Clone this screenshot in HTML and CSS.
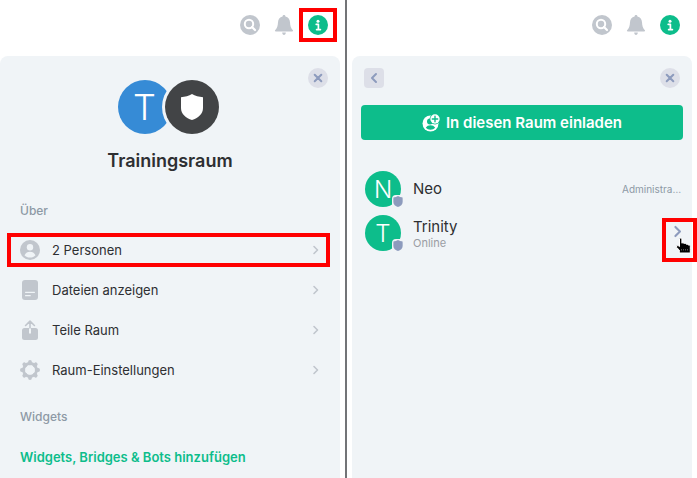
FILE: index.html
```html
<!DOCTYPE html>
<html lang="de">
<head>
<meta charset="utf-8">
<meta name="viewport" content="width=device-width, initial-scale=1">
<title>Trainingsraum</title>
<link rel="stylesheet" href="styles.css">
</head>
<body>
<svg class="defs" aria-hidden="true">
  <symbol id="search" viewBox="0 0 20 20"><circle cx="10" cy="10" r="10" fill="currentColor"/><circle cx="9" cy="9" r="4.200" fill="none" stroke="#fff" stroke-width="2"/><path d="M12 12l3 3" stroke="#fff" stroke-width="2.2" stroke-linecap="round"/></symbol>
  <symbol id="bell" viewBox="0 0 20 20"><path fill="currentColor" d="M10 0c-.9 0-1.400.6-1.400 1.400C5.600 2 4.200 4.300 4 7.300c-.2 4-.8 5.700-2.700 7.600-.7.7-.3 1.500.5 1.500h16.400c.8 0 1.200-.8.5-1.500-1.900-1.900-2.500-3.600-2.700-7.600-.2-3-1.600-5.300-4.600-5.900C11.400.6 10.900 0 10 0zM8.200 17.600h3.600c0 1.400-.8 2.400-1.800 2.400s-1.800-1-1.800-2.400z"/></symbol>
  <symbol id="info" viewBox="0 0 20 20"><circle cx="10" cy="10" r="10" fill="currentColor"/><circle cx="10" cy="6.200" r="1.500" fill="#fff"/><path d="M8.200 9.300h2.200v5M8.600 14.600h3.800" fill="none" stroke="#fff" stroke-width="1.700" stroke-linecap="round" stroke-linejoin="round"/></symbol>
  <symbol id="close" viewBox="0 0 20 20"><path d="M6.700 6.700l6.600 6.600M13.300 6.700l-6.600 6.600" stroke="currentColor" stroke-width="2" stroke-linecap="round"/></symbol>
  <symbol id="back" viewBox="0 0 20 20"><path d="M12 6l-4 4 4 4" fill="none" stroke="currentColor" stroke-width="2" stroke-linecap="round" stroke-linejoin="round"/></symbol>
  <symbol id="chevron" viewBox="0 0 8 10"><path d="M2 1.500L5.500 5 2 8.500" fill="none" stroke="currentColor" stroke-width="1.600" stroke-linecap="round" stroke-linejoin="round"/></symbol>
  <symbol id="shield" viewBox="0 0 22 26"><path fill="currentColor" d="M11 0c3 1.800 7 3 11 3.200V14c0 6-5 10-11 12C5 24 0 20 0 14V3.200C4 3 8 1.800 11 0z"/></symbol>
  <symbol id="person" viewBox="0 0 20 20"><circle cx="10" cy="10" r="10" fill="currentColor"/><circle cx="10" cy="7.200" r="3.200" fill="#f0f4f7"/><path fill="#f0f4f7" d="M4.500 15.200c1.200-2.300 3.200-3.400 5.500-3.400s4.300 1.100 5.500 3.400C14.200 16.700 12.200 17.600 10 17.600s-4.200-.9-5.500-2.400z"/></symbol>
  <symbol id="file" viewBox="0 0 20 20"><rect x="2" width="16" height="20" rx="3" fill="currentColor"/><path d="M5.600 12.300h8.800M5.600 15.700h4.600" stroke="#f0f4f7" stroke-width="1.300" stroke-linecap="round"/></symbol>
  <symbol id="share" viewBox="0 0 20 20"><path fill="currentColor" d="M4.500 8H9v5.500h2V8h4.500A2.500 2.500 0 0 1 18 10.500v7a2.500 2.500 0 0 1-2.500 2.500h-11A2.500 2.500 0 0 1 2 17.500v-7A2.500 2.500 0 0 1 4.500 8z"/><path d="M10 8V1.200M5.600 5.500L10 1.100l4.400 4.400" fill="none" stroke="currentColor" stroke-width="1.600" stroke-linecap="round" stroke-linejoin="round"/></symbol>
  <symbol id="gear" viewBox="0 0 20 20"><g stroke="currentColor" fill="none"><circle cx="10" cy="10" r="6.500" stroke-width="2.800"/><path d="M10 1.900v1.500M10 16.600v1.500M1.900 10h1.500M16.600 10h1.500M4.300 4.300l1 1M14.700 14.700l1 1M4.300 15.700l1-1M14.700 5.300l1-1" stroke-width="3.800" stroke-linecap="round"/></g></symbol>
  <symbol id="invite" viewBox="0 0 18 18"><circle cx="8.500" cy="9.500" r="8" fill="#fff"/><circle cx="8" cy="7.500" r="3" fill="#0dbd8b"/><path fill="#0dbd8b" d="M3.800 13.700c1-1.700 2.700-2.500 4.700-2.500s3.700.8 4.700 2.500c-1.200 1.300-2.900 2-4.700 2s-3.500-.7-4.700-2z"/><circle cx="13" cy="5" r="5.400" fill="#0dbd8b"/><circle cx="13" cy="5" r="4.700" fill="#fff"/><path d="M13 2.300v5.400M10.300 5h5.400" stroke="#0dbd8b" stroke-width="1.400" stroke-linecap="round"/></symbol>
  <symbol id="hand" viewBox="0 0 15 16"><path fill="#000" stroke="#fff" stroke-width="1" stroke-linejoin="round" d="M3.500 1.500c0-1.300 2.400-1.300 2.400 0v4.200c.6-.7 2-.5 2.200.4.700-.5 2-.2 2.200.7.800-.4 1.800 0 2 .8.900-.3 2 .2 2 1.200v3.200V15.500H3.300V12.500L.6 10V8.500c.8-.7 1.900-.4 2.900.6z"/><path d="M5.500 11.500v1.500M7.500 11.500v1.500M9.500 11.500v1.500M11.500 11.500v1.500" stroke="#888" stroke-width=".6"/></symbol>
</svg>
<main class="views">
  <section class="view view-room">
    <header class="toolbar">
      <button class="tool" aria-label="Suchen"><svg><use href="#search"/></svg></button>
      <button class="tool" aria-label="Benachrichtigungen"><svg><use href="#bell"/></svg></button>
      <button class="tool active marked" aria-label="Rauminfo"><svg><use href="#info"/></svg></button>
    </header>
    <div class="panel">
      <div class="panel-bar"><button class="close" aria-label="Schließen"><svg><use href="#close"/></svg></button></div>
      <div class="room">
        <div class="avatars">
          <span class="room-avatar">T</span>
          <span class="room-badge"><svg><use href="#shield"/></svg></span>
        </div>
        <h1>Trainingsraum</h1>
      </div>
      <h2>Über</h2>
      <nav>
        <button class="entry marked"><svg class="icon"><use href="#person"/></svg><span>2 Personen</span><svg class="chevron"><use href="#chevron"/></svg></button>
        <button class="entry"><svg class="icon"><use href="#file"/></svg><span>Dateien anzeigen</span><svg class="chevron"><use href="#chevron"/></svg></button>
        <button class="entry"><svg class="icon"><use href="#share"/></svg><span>Teile Raum</span><svg class="chevron"><use href="#chevron"/></svg></button>
        <button class="entry"><svg class="icon"><use href="#gear"/></svg><span>Raum-Einstellungen</span><svg class="chevron"><use href="#chevron"/></svg></button>
      </nav>
      <h2 class="widgets">Widgets</h2>
      <a class="add" href="#widgets">Widgets, Bridges &amp; Bots hinzufügen</a>
    </div>
  </section>
  <section class="view view-members">
    <header class="toolbar">
      <button class="tool" aria-label="Suchen"><svg><use href="#search"/></svg></button>
      <button class="tool" aria-label="Benachrichtigungen"><svg><use href="#bell"/></svg></button>
      <button class="tool active" aria-label="Rauminfo"><svg><use href="#info"/></svg></button>
    </header>
    <div class="panel">
      <div class="panel-bar">
        <button class="back" aria-label="Zurück"><svg><use href="#back"/></svg></button>
        <button class="close" aria-label="Schließen"><svg><use href="#close"/></svg></button>
      </div>
      <button class="invite"><svg><use href="#invite"/></svg><span>In diesen Raum einladen</span></button>
      <ul class="members">
        <li>
          <span class="avatar">N<svg><use href="#shield"/></svg></span>
          <span class="who"><span class="name">Neo</span></span>
          <span class="role">Administrator</span>
        </li>
        <li>
          <span class="avatar">T<svg><use href="#shield"/></svg></span>
          <span class="who"><span class="name">Trinity</span><span class="status">Online</span></span>
          <button class="open" aria-label="Trinity öffnen"><svg class="arrow"><use href="#chevron"/></svg><svg class="hand"><use href="#hand"/></svg></button>
        </li>
      </ul>
    </div>
  </section>
</main>
</body>
</html>
```
FILE: styles.css
```css
* { box-sizing: border-box; }

body {
  margin: 0;
  background: #fff;
  color: #2e2f32;
  font: 13px/20px Inter, "Liberation Sans", sans-serif;
}

button {
  border: 0;
  padding: 0;
  background: none;
  color: inherit;
  font: inherit;
  cursor: pointer;
}

svg { display: block; }
.defs { display: none; }

.views { display: flex; min-height: 100vh; overflow: hidden; }
.view { flex: 1; min-width: 0; display: flex; flex-direction: column; }
.view-room { padding-right: 5px; }
.view-members { padding: 0 5px; border-left: 2px solid #737477; }

.toolbar {
  display: flex;
  justify-content: flex-end;
  align-items: center;
  gap: 14px;
  padding: 15px 12px 21px;
}
.tool, .tool svg { width: 20px; height: 20px; }
.tool { color: #c1c6cd; }
.tool.active { color: #0dbd8b; }

.marked { position: relative; }
.marked::after {
  content: "";
  position: absolute;
  border: 4px solid #f00;
}
.tool.marked::after { inset: -7px -9px; }
.entry.marked::after { inset: 3px 2px 3px -1px; }

.panel {
  flex: 1;
  padding: 12px 8px 0;
  border-radius: 8px 8px 0 0;
  background: #f0f4f7;
}
.panel-bar { display: flex; height: 20px; padding: 0 4px; }
.close, .back { width: 20px; height: 20px; background: #dddfe8; color: #8d9bbd; }
.close svg, .back svg { width: 20px; height: 20px; }
.close { margin-left: auto; border-radius: 50%; }
.back { border-radius: 4px; }

.room { display: flex; flex-direction: column; align-items: center; margin-top: -8px; }
.avatars { display: flex; padding-right: 4px; }
.room-avatar, .room-badge {
  width: 54px;
  height: 54px;
  border-radius: 50%;
  display: flex;
  align-items: center;
  justify-content: center;
}
.room-avatar { background: #368bd6; color: #fff; font-size: 36px; font-weight: 300; }
.room-badge { margin-left: -7px; background: #424446; color: #fff; box-shadow: 0 0 0 3px #f0f4f7; }
.room-badge svg { width: 22px; height: 26px; }

h1 { margin: 15px 0 0; font-size: 18px; line-height: 24px; font-weight: 600; }
h2 { margin: 28px 12px 20px; font-size: 12px; line-height: 20px; font-weight: 500; color: #8d99a5; }
h2.widgets { margin: 17px 12px 20px; }

nav { display: flex; flex-direction: column; margin-top: -11px; }
.entry {
  display: flex;
  align-items: center;
  gap: 12px;
  height: 40px;
  padding: 0 12px;
  text-align: left;
}
.entry .icon { width: 20px; height: 20px; color: #c1c6cd; }
.entry span { flex: 1; }
.entry .chevron { width: 8px; height: 10px; color: #c1c6cd; }

.add { display: block; margin: 0 12px; color: #0dbd8b; font-weight: 600; text-decoration: none; }

.invite {
  display: flex;
  align-items: center;
  justify-content: center;
  gap: 6px;
  width: calc(100% - 2px);
  height: 35px;
  margin: 17px 1px 0;
  border-radius: 4px;
  background: #0dbd8b;
  color: #fff;
  font-size: 15px;
  font-weight: 600;
}
.invite svg { width: 18px; height: 18px; }

.members { list-style: none; margin: 27px 0 0; padding: 0 0 0 5px; }
.members li { display: flex; align-items: center; gap: 12px; height: 44px; }
.avatar {
  position: relative;
  width: 36px;
  height: 36px;
  border-radius: 50%;
  background: #0dbd8b;
  color: #fff;
  font-size: 24px;
  font-weight: 300;
  line-height: 38px;
  text-align: center;
}
.avatar svg {
  position: absolute;
  right: -3px;
  bottom: -1px;
  width: 12px;
  height: 13px;
  padding: 1px;
  border-radius: 4px;
  background: #f0f4f7;
  color: #8d9bbd;
}
.who { flex: 1; display: flex; flex-direction: column; }
.name { font-size: 15px; line-height: 20px; }
.status { font-size: 11px; line-height: 12px; color: #9a9da3; }
.role {
  width: 62px;
  overflow: hidden;
  color: #8d99a5;
  font-size: 10px;
  text-overflow: ellipsis;
}
.open {
  position: relative;
  align-self: flex-start;
  width: 35px;
  height: 44px;
  margin: 7px -13px 0 0;
  border: 4px solid #f00;
}
.arrow { position: absolute; top: 3px; left: 6px; width: 12px; height: 13px; color: #8d9bbd; }
.hand { position: absolute; top: 15px; left: 10px; width: 15px; height: 17px; }
```
